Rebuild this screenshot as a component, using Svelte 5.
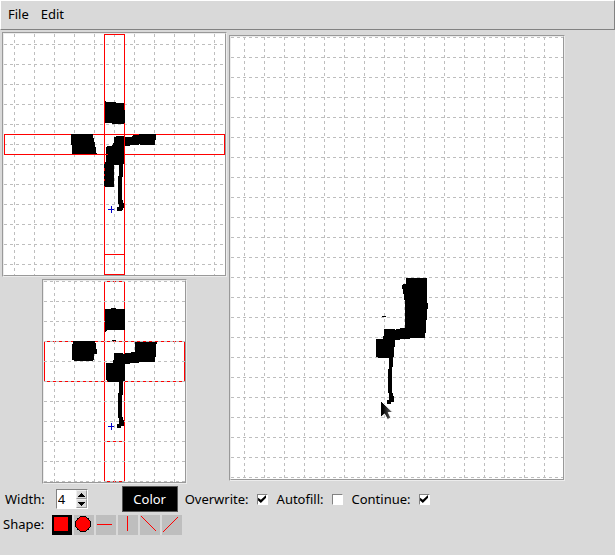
<script>
  let width = $state(4);
  let overwrite = $state(true);
  let autofill = $state(false);
  let keepGoing = $state(true);
  let shape = $state('square');

  const shapes = ['square', 'circle', 'horizontal', 'vertical', 'falling', 'rising'];

  // positions of the dashed guide lines, one every 20 units
  const range = (first, end) => {
    const out = [];
    for (let v = first; v < end; v += 20) out.push(v);
    return out;
  };

  function step(by) {
    width = Math.max(1, Number(width) + by);
  }
</script>

{#snippet grid(w, h, x0, y0)}
  <g class="grid">
    {#each range(x0, w) as x}
      <line x1={x + 0.5} x2={x + 0.5} y1="0" y2={h} />
    {/each}
    {#each range(y0, h) as y}
      <line x1="0" x2={w} y1={y + 0.5} y2={y + 0.5} />
    {/each}
  </g>
{/snippet}

<div class="app">
  <nav class="menubar">
    <button type="button">File</button>
    <button type="button">Edit</button>
  </nav>

  <main>
    <div class="views">
      <div class="column">
        <div class="frame">
          <svg width="221" height="241" viewBox="4 34 221 241" role="img" aria-label="Top view">
            <g transform="translate(4 34)">{@render grid(221, 241, 10, 10)}</g>
            <path
              class="ink"
              d="M105 101H106V102H116V103H125V124H112V123H105ZM71 134H93V138H94V142H95V147H96V153H97V154H72V145H71ZM114 137H116V136H125V137H132V136H133V135H139V134H156V140H155V145H140V144H139V145H130V146H125V164H123V177H122V200H123V203H124V208H123V210H122V211H117V207H119V204H118V176H119V165H114V187H104V162H106V147H107V146H112V145H113V143H114Z"
            />
            <g class="guide">
              <rect x="104.5" y="34.5" width="20" height="240" />
              <rect x="4.5" y="134.5" width="220" height="20" />
              <line x1="104" x2="125" y1="254.5" y2="254.5" />
            </g>
            <path
              class="ink"
              d="M105 104H106V122H105ZM105 110H125V123H105ZM108 147H124V163H108ZM104 164H105V168H104ZM104 171H105V174H104ZM104 176H105V179H104ZM104 181H105V186H104ZM71 134H93V136H71ZM139 134H156V136H139Z"
            />
            <path class="cross" d="M108 209.5H114M111.5 206V213" />
          </svg>
        </div>
        <div class="frame">
          <svg width="141" height="201" viewBox="44 281 141 201" role="img" aria-label="Front view">
            <g class="guide">
              <rect x="104.5" y="281.5" width="20" height="200" />
              <rect x="44.5" y="341.5" width="140" height="40" />
              <line x1="104" x2="125" y1="441.5" y2="441.5" />
            </g>
            <g transform="translate(44 281)">{@render grid(141, 201, 10, 0)}</g>
            <path
              class="ink"
              d="M105 309H111V308H116V309H125V330H107V331H106V332H105ZM112 340H116V341H112ZM73 341H95V343H96V349H97V354H94V360H93V361H74V360H72V344H73ZM114 353H123V354H125V353H131V352H135V342H157V344H156V357H155V362H139V363H130V364H125V381H123V395H122V417H123V420H124V426H121V428H117V424H119V418H118V393H119V382H108V381H107V380H106V363H113V360H114Z"
            />
            <path class="cross" d="M108 426.5H114M111.5 423V430" />
          </svg>
        </div>
      </div>

      <div class="frame">
        <svg width="332" height="442" viewBox="231 37 332 442" role="img" aria-label="Side view">
          <defs>
            <linearGradient id="pointer-fill" x1="0" x2="1" y1="0" y2="0">
              <stop offset="0.2" stop-color="#000" />
              <stop offset="1" stop-color="#777" />
            </linearGradient>
          </defs>
          <g transform="translate(231 37)">{@render grid(332, 442, 13, 0)}</g>
          <path
            class="ink"
            d="M406 278H427V303H428V309H427V320H426V333H425V338H410V339H400V340H395V347H394V357H393V367H392V393H393V396H394V402H391V404H387V400H389V393H388V369H389V358H378V357H376V339H383V336H384V329H395V330H396V329H400V328H405V327H405V300H404V294H403V289H402V285H403V284H406ZM382 316H386V317H382Z"
          />
          <path
            class="pointer"
            d="M380.5 400.5V417.5L384.5 414L387.5 419.5L391 418L388.3 412.5H393Z"
          />
        </svg>
      </div>
    </div>

    <div class="options">
      <label for="width">Width:</label>
      <div class="spin">
        <input id="width" type="number" min="1" bind:value={width} />
        <div class="arrows">
          <button type="button" aria-label="Increase" onclick={() => step(1)}>
            <svg width="7" height="4" viewBox="0 0 7 4"><path d="M3 0H4V1H5V2H6V3H7V4H0V3H1V2H2V1H3Z" /></svg>
          </button>
          <button type="button" aria-label="Decrease" onclick={() => step(-1)}>
            <svg width="7" height="4" viewBox="0 0 7 4"><path d="M0 0H7V1H6V2H5V3H4V4H3V3H2V2H1V1H0Z" /></svg>
          </button>
        </div>
      </div>
      <button type="button" class="color">Color</button>
      <label class="check">Overwrite: <input type="checkbox" bind:checked={overwrite} /></label>
      <label class="check">Autofill: <input type="checkbox" bind:checked={autofill} /></label>
      <label class="check">Continue: <input type="checkbox" bind:checked={keepGoing} /></label>
    </div>

    <div class="shapes" role="group" aria-labelledby="shape-label">
      <span id="shape-label">Shape:</span>
      {#each shapes as name}
        <button
          type="button"
          class:active={shape === name}
          aria-label={name}
          aria-pressed={shape === name}
          onclick={() => (shape = name)}
        >
          <svg width="20" height="20" viewBox="0 0 20 20">
            {#if name === 'square'}
              <rect x="2" y="2" width="14" height="14" fill="#f00" />
            {:else if name === 'circle'}
              <circle cx="9" cy="9" r="7.5" fill="#f00" stroke="#000" />
            {:else if name === 'horizontal'}
              <path d="M1 9.5H16" />
            {:else if name === 'vertical'}
              <path d="M9.5 1V16" />
            {:else if name === 'falling'}
              <path d="M1.5 1.5L16 16" />
            {:else}
              <path d="M1 17L16 2" />
            {/if}
          </svg>
        </button>
      {/each}
    </div>
  </main>
</div>

<style>
  :global(body) {
    margin: 0;
    background: #d9d9d9;
  }

  .app {
    min-height: 100vh;
    color: #000;
    background: #d9d9d9;
    font: 13px/18px 'Noto Sans', 'Open Sans', sans-serif;
  }

  button,
  input {
    margin: 0;
    padding: 0;
    border: 0;
    border-radius: 0;
    font: inherit;
    color: inherit;
    background: none;
  }

  svg {
    display: block;
    flex: none;
    shape-rendering: crispEdges;
  }

  .menubar {
    display: flex;
    align-items: center;
    gap: 12px;
    box-sizing: border-box;
    height: 30px;
    padding: 0 7px 2px;
    border: 1px solid;
    border-color: #fff #828282 #828282 #fff;
  }

  main {
    padding: 2px;
  }

  .views {
    display: flex;
    align-items: center;
    gap: 2px;
  }

  .column {
    display: flex;
    flex-direction: column;
    align-items: center;
    gap: 2px;
  }

  .frame {
    border: 1px solid;
    border-color: #999 #ececec #ececec #999;
  }

  .frame > svg {
    border: 1px solid;
    border-color: #ececec #999 #999 #ececec;
    background: #fff;
  }

  .grid line {
    stroke: #bebebe;
    stroke-dasharray: 3 3;
  }

  .guide {
    fill: none;
    stroke: #f00;
  }

  .ink {
    fill: #000;
  }

  .cross {
    stroke: #00c;
  }

  .pointer {
    fill: url(#pointer-fill);
    stroke: #fff;
    shape-rendering: auto;
  }

  .options {
    display: flex;
    align-items: center;
    height: 26px;
    margin-top: 2px;
    padding-left: 3px;
  }

  .spin {
    display: flex;
    box-sizing: border-box;
    width: 32px;
    height: 20px;
    margin: 0 34px 0 11px;
    border: 1px solid;
    border-color: #828282 #fff #fff #828282;
    background: #fff;
  }

  .spin input {
    flex: 1;
    min-width: 0;
    padding-left: 1px;
    appearance: textfield;
    outline: 0;
  }

  .spin input::-webkit-inner-spin-button {
    appearance: none;
    margin: 0;
  }

  .arrows {
    display: flex;
    flex-direction: column;
    width: 11px;
  }

  .arrows button {
    display: flex;
    flex: 1;
    align-items: center;
    justify-content: center;
    border: 1px solid;
    border-color: #eee #999 #999 #eee;
    background: #d9d9d9;
  }

  .color {
    box-sizing: border-box;
    width: 56px;
    height: 26px;
    margin-right: 7px;
    border: 1px solid #555;
    color: #fff;
    background: #000;
  }

  .check {
    display: flex;
    align-items: center;
    gap: 8px;
    margin-right: 9px;
  }

  .check input {
    display: grid;
    place-items: center;
    box-sizing: border-box;
    width: 11px;
    height: 11px;
    border: 1px solid;
    border-color: #828282 #fff #fff #828282;
    appearance: none;
    background: #fff;
  }

  .check input:checked::before {
    content: '';
    width: 8px;
    height: 8px;
    background: #000;
    clip-path: polygon(0 35%, 35% 60%, 100% 0, 100% 35%, 35% 100%, 0 70%);
  }

  .shapes {
    display: flex;
    align-items: flex-start;
    gap: 2px;
    margin-top: 3px;
    padding-left: 1px;
  }

  .shapes span {
    width: 47px;
  }

  .shapes button {
    box-sizing: border-box;
    width: 20px;
    height: 20px;
    background: #bebebe;
  }

  .shapes .active {
    background: #000;
  }

  .shapes path {
    fill: none;
    stroke: #f00;
  }
</style>
